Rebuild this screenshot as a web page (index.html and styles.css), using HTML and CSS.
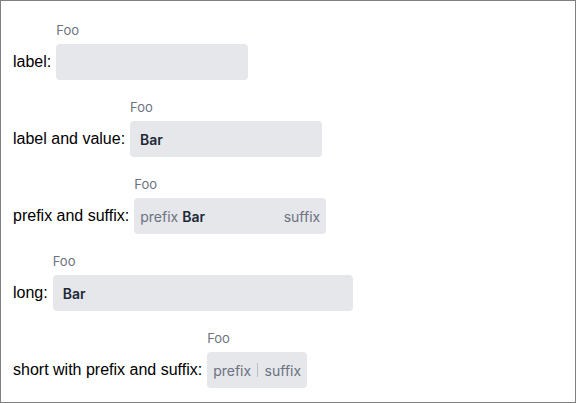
FILE: index.html
```html
<!DOCTYPE html>
<html>
<head>
<meta charset="utf-8">
<link rel="stylesheet" href="styles.css">
</head>
<body>
<div class="frame">
  <div class="row">
    <span class="label">label:</span>
    <div class="field">
      <div class="caption">Foo</div>
      <div class="box"><span class="input"></span></div>
    </div>
  </div>
  <div class="row">
    <span class="label">label and value:</span>
    <div class="field">
      <div class="caption">Foo</div>
      <div class="box"><span class="input">Bar</span></div>
    </div>
  </div>
  <div class="row">
    <span class="label">prefix and suffix:</span>
    <div class="field">
      <div class="caption">Foo</div>
      <div class="box affixed"><span class="affix">prefix</span><span class="input">Bar</span><span class="affix">suffix</span></div>
    </div>
  </div>
  <div class="row">
    <span class="label">long:</span>
    <div class="field">
      <div class="caption">Foo</div>
      <div class="box long"><span class="input">Bar</span></div>
    </div>
  </div>
  <div class="row">
    <span class="label">short with prefix and suffix:</span>
    <div class="field">
      <div class="caption">Foo</div>
      <div class="box affixed short"><span class="affix">prefix</span><span class="input empty"></span><span class="affix">suffix</span></div>
    </div>
  </div>
</div>
</body>
</html>
```

FILE: styles.css
```css
html, body {
  margin: 0;
  padding: 0;
  background: #fff;
}
.frame {
  box-sizing: border-box;
  width: 576px;
  height: 403px;
  border: 1px solid #808080;
  padding: 21px 0 0 12px;
  display: flex;
  flex-direction: column;
  gap: 19px;
}
.row {
  display: flex;
  align-items: flex-end;
  gap: 5px;
}
.label {
  font-family: "Liberation Sans", Arial, sans-serif;
  font-size: 16px;
  line-height: 36px;
  color: #000;
}
.field {
  display: flex;
  flex-direction: column;
  font-family: Inter, "Noto Sans", sans-serif;
}
.caption {
  font-size: 13px;
  line-height: 16px;
  color: #6b7280;
  margin-bottom: 6px;
}
.box {
  box-sizing: border-box;
  width: 192px;
  height: 36px;
  background: #e5e7eb;
  border-radius: 4px;
  display: flex;
  align-items: center;
  padding: 0 6px;
  font-size: 14px;
}
.box.long { width: 300px; }
.box.short { width: 100px; }
.input {
  flex: 1;
  min-width: 0;
  padding: 0 4px;
  font-weight: 600;
  color: #1f2937;
  display: flex;
  align-items: center;
  justify-content: flex-start;
}
.affix {
  color: #6b7280;
}
.input.empty { justify-content: center; }
.input.empty::before {
  content: "";
  width: 1px;
  height: 14px;
  background: #b9bdc5;
}
```
